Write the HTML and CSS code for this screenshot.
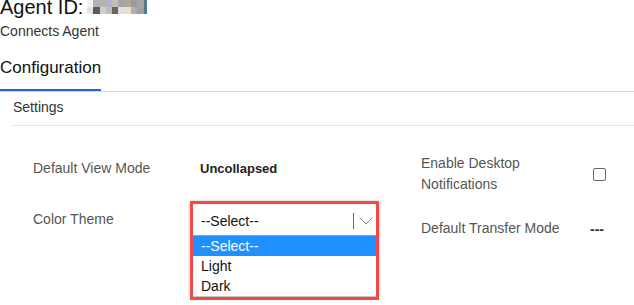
FILE: index.html
```html
<!DOCTYPE html>
<html>
    <head>
        <meta charset="UTF-8">
        <title>Agent Configuration</title>
        <link rel="stylesheet" href="styles.css">
    </head>
    <body>
        <div class="agent">
            <h1 class="agent-id">Agent ID: <span class="masked"><i class="c1"></i><i class="c2"></i><i class="c3"></i><i class="c4"></i><i class="c5"></i><i class="c6"></i><i class="c7"></i><i class="c8"></i><i class="c9"></i><i class="edge"></i><i class="d1"></i><i class="d2"></i><i class="d3"></i><i class="d4"></i><i class="d5"></i><i class="d6"></i><i class="d7"></i><i class="d8"></i><i class="d9"></i><i class="edge"></i></span></h1>
            <div class="agent-type">Connects Agent</div>
        </div>
        <ul class="tabs">
            <li class="tab active">Configuration</li>
        </ul>
        <div class="section">
            <div class="section-title">Settings</div>
            <div class="form">
                <div class="col col-left">
                    <div class="row">
                        <div class="label">Default View Mode</div>
                        <div class="value strong">Uncollapsed</div>
                    </div>
                    <div class="row row-theme">
                        <div class="label">Color Theme</div>
                        <div class="callout">
                            <div class="select">
                                <span class="select-text">--Select--</span>
                                <span class="select-sep"></span>
                                <svg class="chevron" width="14" height="8" viewBox="0 0 14 8"><path d="M0.5 0.5 L7 7 L13.5 0.5" fill="none" stroke="#8a8a8a" stroke-width="1"/></svg>
                            </div>
                            <ul class="options">
                                <li class="option selected">--Select--</li>
                                <li class="option">Light</li>
                                <li class="option">Dark</li>
                            </ul>
                        </div>
                    </div>
                </div>
                <div class="col col-right">
                    <div class="row">
                        <div class="label label-right">Enable Desktop Notifications</div>
                        <span class="checkbox"></span>
                    </div>
                    <div class="row row-transfer">
                        <div class="label label-right">Default Transfer Mode</div>
                        <div class="value dash">---</div>
                    </div>
                </div>
            </div>
        </div>
    </body>
</html>
```

FILE: styles.css
```css
*{
    margin: 0;
    padding: 0;
    box-sizing: border-box;
}
html,body{
    width: 100%;
    overflow: hidden;
}
body{
    background: #fff;
    color: #222;
    font-family: "Liberation Sans", Arial, sans-serif;
    font-size: 14px;
}
.agent{
    margin-top: -4px;
}
.agent-id{
    font-size: 20px;
    font-weight: normal;
    line-height: 23px;
    height: 23px;
    color: #111;
    white-space: nowrap;
}
.masked{
    display: inline-grid;
    grid-template-columns: repeat(9, 6.3px) 3px;
    grid-template-rows: 7px 7px;
    vertical-align: top;
    margin: 4px 0 0 -2px;
}
.masked i{
    display: block;
}
.masked .edge{ background: #4f7896; }
.c1{ background: #f2f2f2; }
.c2{ background: #b2b2b2; }
.c3{ background: #bcb2aa; }
.c4{ background: #aeb2cc; }
.c5{ background: #c6beb6; }
.c6{ background: #a6a6a6; }
.c7{ background: #b4a694; }
.c8{ background: #9c9c9c; }
.c9{ background: #aaa2a2; }
.d1{ background: #e4e4e4; }
.d2{ background: #5a5a5a; }
.d3{ background: #cfcfcf; }
.d4{ background: #bdbdbd; }
.d5{ background: #666; }
.d6{ background: #dedede; }
.d7{ background: #ecdcca; }
.d8{ background: #b0b0b0; }
.d9{ background: #a0a0a0; }
.agent-type{
    margin-top: 3px;
    font-size: 14px;
    line-height: 18px;
    color: #333;
}
.tabs{
    list-style: none;
    display: flex;
    margin-top: 18px;
    border-bottom: 1px solid #d6d6d6;
}
.tab{
    font-size: 17px;
    line-height: 20px;
    padding-bottom: 11px;
    color: #111;
    border-bottom: 2px solid transparent;
}
.tab.active{
    border-bottom-color: #2266dd;
}
.section{
    padding-left: 11px;
}
.section-title{
    padding: 5px 0 8px 2px;
    font-size: 14px;
    line-height: 20px;
    color: #333;
    border-bottom: 1px solid #e6e6e6;
}
.form{
    display: flex;
    align-items: flex-start;
    padding-left: 22px;
}
.col-left{
    width: 388px;
    padding-top: 31px;
}
.col-right{
    padding-top: 27px;
}
.row{
    display: flex;
    align-items: center;
}
.label{
    width: 157px;
    line-height: 20px;
    color: #555;
}
.label-right{
    width: 169px;
    padding-right: 29px;
    line-height: 21px;
}
.value{
    line-height: 20px;
}
.strong{
    padding: 2px 0 0 10px;
    font-size: 13px;
    font-weight: bold;
    color: #222;
}
.row-theme{
    align-items: flex-start;
    margin-top: 22px;
}
.row-theme .label{
    margin-top: 8px;
}
.callout{
    width: 189px;
    border: 3px solid #f44848;
    box-shadow: 0 0 3px rgba(0,0,0,0.25);
    font-size: 14px;
}
.select{
    display: flex;
    align-items: center;
    height: 31px;
    padding-left: 8px;
    background: #fff;
}
.select-text{
    flex: 1;
    line-height: 20px;
    color: #111;
    padding-top: 3px;
}
.select-sep{
    width: 1px;
    height: 16px;
    background: #666;
    margin-top: 3px;
}
.chevron{
    margin: 3px 3px 0 5px;
}
.options{
    list-style: none;
    border-top: 1px solid #9a9a9a;
    border-bottom: 1px solid #c8c8c8;
}
.option{
    height: 20px;
    line-height: 20px;
    padding-left: 8px;
    color: #111;
}
.option.selected{
    background: #1e90ff;
    color: #fff;
}
.checkbox{
    display: block;
    width: 13px;
    height: 13px;
    margin-left: 3px;
    border: 1px solid #666;
    border-radius: 2px;
}
.row-transfer{
    margin-top: 22px;
}
.dash{
    font-size: 14px;
    font-weight: bold;
    color: #333;
    padding-top: 2px;
}
```
